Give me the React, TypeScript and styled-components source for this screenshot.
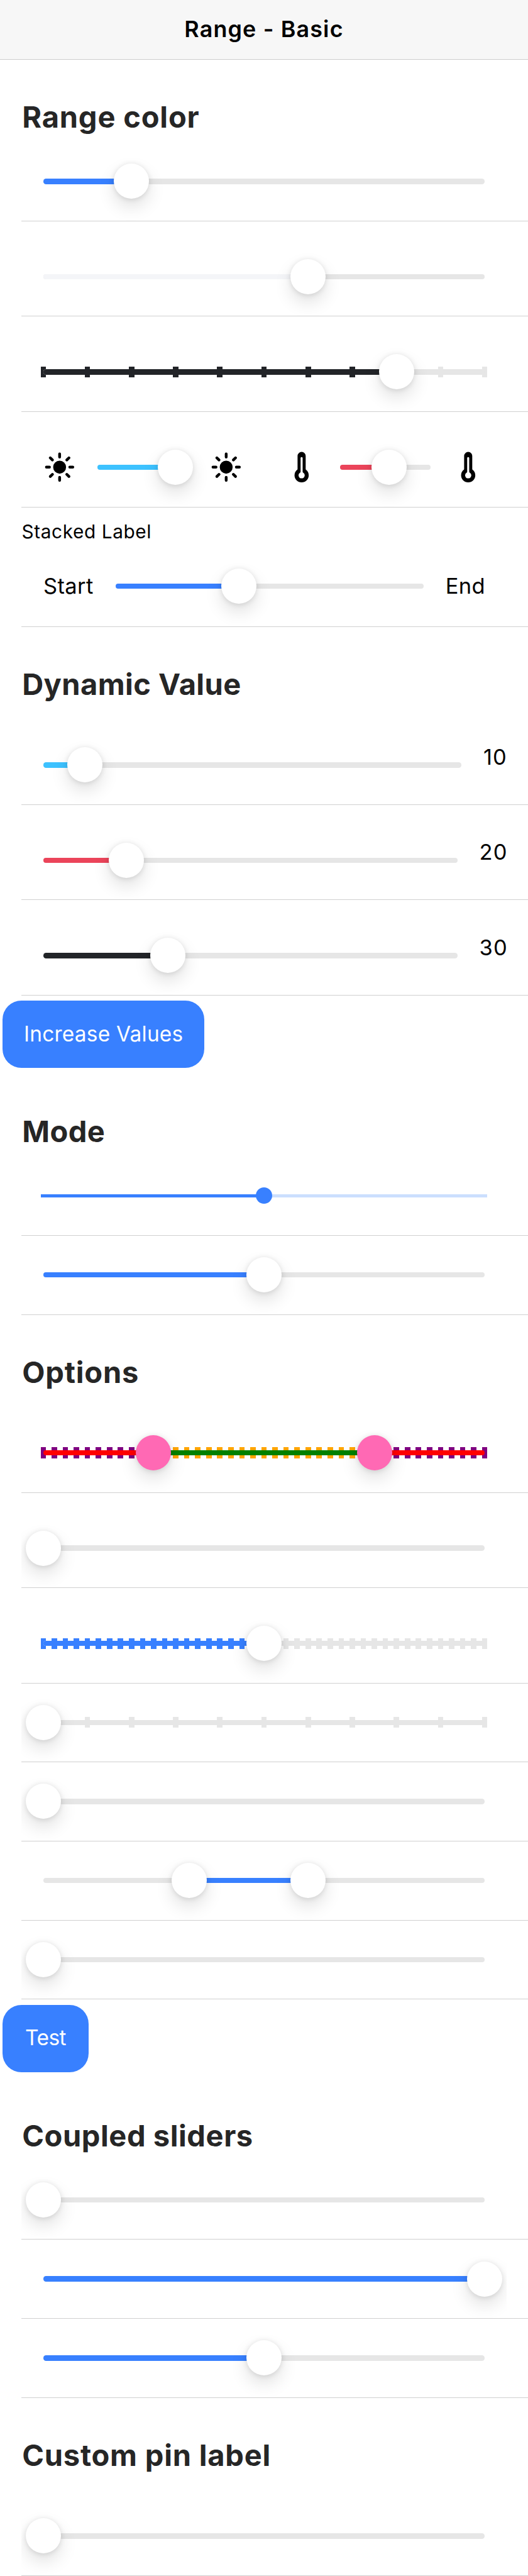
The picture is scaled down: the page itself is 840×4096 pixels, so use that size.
import React from 'react';
import styled, { createGlobalStyle } from 'styled-components';
import { IoSunny, IoThermometer } from 'react-icons/io5';

// Sizes are written on a 1170-unit wide grid and scaled to an 840px page.
const h = (n: number) => `${+((n * 840) / 1170).toFixed(3)}px`;
const v = (n: number) => `${+((n * 4096) / 5703).toFixed(3)}px`;

const colors = {
  primary: '#3880ff',
  tertiary: '#3dc2ff',
  danger: '#eb445a',
  dark: '#222428',
  light: '#f4f5f8',
  track: '#e6e6e6',
};

const GlobalStyle = createGlobalStyle`
  *, *::before, *::after { box-sizing: border-box; }
  body {
    margin: 0;
    background: #fff;
    color: #000;
    font-family: Inter, "Liberation Sans", sans-serif;
  }
`;

const Page = styled.main`
  width: 840px;
  height: 4096px;
  overflow: hidden;
  background: #fff;
`;

const Toolbar = styled.header`
  display: flex;
  align-items: center;
  justify-content: center;
  height: ${v(132)};
  background: #f7f7f7;
  border-bottom: 1px solid #cdcdcd;
`;

const Title = styled.h1`
  margin: 0;
  font-size: ${h(50)};
  font-weight: 600;
  line-height: 1.2;
  letter-spacing: ${h(1.6)};
`;

const ListHeader = styled.h2<{ $spacing: number }>`
  display: flex;
  align-items: center;
  height: ${v(183)};
  margin: 0;
  padding: ${v(70)} 0 0 ${h(49)};
  color: #262626;
  font-size: ${h(65.5)};
  font-weight: 700;
  letter-spacing: ${(p) => h(p.$spacing)};
`;

const Item = styled.div<{ $tall?: boolean }>`
  display: flex;
  align-items: flex-end;
  height: ${(p) => v(p.$tall ? 211 : 175)};
  margin-left: ${h(48)};
  padding-right: ${h(48)};
  border-bottom: 1px solid #d0d0d0;
`;

const StackedItem = styled(Item)`
  flex-direction: column;
  align-items: stretch;
  justify-content: space-between;
  height: ${v(265)};
  padding-top: ${v(28)};
  padding-bottom: ${v(2)};
`;

const StackedLabel = styled.span`
  height: ${v(52)};
  font-size: ${h(41.5)};
  line-height: ${v(52)};
  letter-spacing: ${h(0.85)};
`;

const RangeBox = styled.div`
  display: flex;
  flex: 1 1 auto;
  align-items: center;
  gap: ${h(48)};
  height: ${v(174)};
  padding: 0 ${h(48)};
  overflow: hidden;
`;

const StackedRange = styled(RangeBox)`
  flex: none;
`;

const SplitRange = styled(RangeBox)`
  flex: 1 1 0;
`;

const Track = styled.div<{ $thin?: boolean }>`
  position: relative;
  flex: 1;
  height: ${(p) => h(p.$thin ? 6 : 12)};
  margin: 0 ${(p) => (p.$thin ? h(-6) : 0)};
`;

const Bar = styled.div<{ $color: string; $round?: boolean }>`
  position: absolute;
  top: 0;
  bottom: 0;
  border-radius: ${(p) => (p.$round ? h(6) : 0)};
  background: ${(p) => p.$color};
`;

const Tick = styled.div<{ $color: string }>`
  position: absolute;
  top: ${h(-6)};
  width: ${h(12)};
  height: ${h(24)};
  margin-left: ${h(-6)};
  background: ${(p) => p.$color};
`;

const Knob = styled.div<{ $color: string }>`
  position: absolute;
  top: 50%;
  width: ${h(78)};
  height: ${h(78)};
  margin: ${h(-39)} 0 0 ${h(-39)};
  border-radius: 50%;
  background: ${(p) => p.$color};
  box-shadow: 0 ${h(1.5)} ${h(12)} rgba(0, 0, 0, 0.12), 0 ${h(18)} ${h(39)} rgba(0, 0, 0, 0.12);
`;

const Dot = styled(Knob)`
  width: ${h(36)};
  height: ${h(36)};
  margin: ${h(-18)} 0 0 ${h(-18)};
  box-shadow: none;
`;

const Side = styled.span<{ $width: number; $spacing: number }>`
  flex: none;
  width: ${(p) => h(p.$width)};
  font-size: ${h(48)};
  line-height: 1.2;
  letter-spacing: ${(p) => h(p.$spacing)};
  white-space: nowrap;
`;

const Value = styled(Side)`
  align-self: center;
`;

const IconBox = styled.span`
  display: flex;
  flex: none;
  font-size: ${h(72)};
`;

const ButtonRow = styled.div`
  display: flex;
  height: ${v(174)};
  padding: ${v(12)} ${h(6)} ${v(13)};
`;

const Button = styled.button<{ $width: number; $spacing: number }>`
  display: flex;
  align-items: center;
  justify-content: center;
  width: ${(p) => h(p.$width)};
  padding: 0 0 ${v(4)};
  border: 0;
  border-radius: ${h(42)};
  background: ${colors.primary};
  color: #fff;
  font-family: inherit;
  font-size: ${h(46.6)};
  font-weight: 400;
  letter-spacing: ${(p) => h(p.$spacing)};
  white-space: nowrap;
`;

interface SliderProps {
  from?: number;
  to: number;
  color?: string;
  track?: string;
  steps?: number;
  tickColor?: string;
  activeTickColor?: string;
  knob?: string;
}

function Slider({
  from,
  to,
  color = colors.primary,
  track = colors.track,
  steps = 0,
  tickColor = track,
  activeTickColor = color,
  knob = '#fff',
}: SliderProps) {
  const start = from ?? 0;
  const ticks = steps ? Array.from({ length: steps + 1 }, (_, i) => (i * 100) / steps) : [];
  return (
    <Track>
      {ticks.map((t) => (
        <Tick key={t} $color={t >= start && t <= to ? activeTickColor : tickColor} style={{ left: `${t}%` }} />
      ))}
      <Bar $color={track} $round style={{ left: 0, right: 0 }} />
      <Bar $color={color} $round={from === undefined} style={{ left: `${start}%`, width: `${to - start}%` }} />
      {from !== undefined && <Knob $color={knob} style={{ left: `${from}%` }} />}
      <Knob $color={knob} style={{ left: `${to}%` }} />
    </Track>
  );
}

function RangeItem({ tall, ...slider }: SliderProps & { tall?: boolean }) {
  return (
    <Item $tall={tall}>
      <RangeBox>
        <Slider {...slider} />
      </RangeBox>
    </Item>
  );
}

function ValueItem({ value, color, width }: { value: number; color: string; width: number }) {
  return (
    <Item $tall>
      <RangeBox>
        <Slider to={value} color={color} />
      </RangeBox>
      <Value $width={width} $spacing={1.6}>
        {value}
      </Value>
    </Item>
  );
}

export default function App() {
  return (
    <>
      <GlobalStyle />
      <Page>
        <Toolbar>
          <Title>Range - Basic</Title>
        </Toolbar>

        <ListHeader $spacing={1.15}>Range color</ListHeader>
        <RangeItem to={20} />
        <RangeItem tall to={60} color={colors.light} />
        <RangeItem tall to={80} color={colors.dark} steps={10} />
        <Item $tall>
          <SplitRange>
            <IconBox><IoSunny /></IconBox>
            <Slider to={86} color={colors.tertiary} />
            <IconBox><IoSunny /></IconBox>
          </SplitRange>
          <SplitRange>
            <IconBox><IoThermometer /></IconBox>
            <Slider to={54} color={colors.danger} />
            <IconBox><IoThermometer /></IconBox>
          </SplitRange>
        </Item>
        <StackedItem>
          <StackedLabel>Stacked Label</StackedLabel>
          <StackedRange>
            <Side $width={112} $spacing={0.55}>Start</Side>
            <Slider to={40} />
            <Side $width={87} $spacing={0.6}>End</Side>
          </StackedRange>
        </StackedItem>

        <ListHeader $spacing={0.6}>Dynamic Value</ListHeader>
        <ValueItem value={10} color={colors.tertiary} width={51} />
        <ValueItem value={20} color={colors.danger} width={60} />
        <ValueItem value={30} color={colors.dark} width={60} />
        <ButtonRow>
          <Button $width={447} $spacing={0.3}>Increase Values</Button>
        </ButtonRow>

        <ListHeader $spacing={0.6}>Mode</ListHeader>
        <Item>
          <RangeBox>
            <Track $thin>
              <Bar $color="#cbdffe" style={{ left: 0, right: 0 }} />
              <Bar $color={colors.primary} style={{ left: 0, width: '50%' }} />
              <Dot $color={colors.primary} style={{ left: '50%' }} />
            </Track>
          </RangeBox>
        </Item>
        <RangeItem to={50} />

        <ListHeader $spacing={1.15}>Options</ListHeader>
        <RangeItem
          tall
          from={25}
          to={75}
          color="green"
          track="red"
          steps={40}
          tickColor="purple"
          activeTickColor="orange"
          knob="hotpink"
        />
        <RangeItem tall to={0} />
        <RangeItem tall to={50} steps={40} />
        <RangeItem to={0} steps={10} />
        <RangeItem to={0} />
        <RangeItem from={33} to={60} />
        <RangeItem to={0} />
        <ButtonRow>
          <Button $width={190} $spacing={-0.8}>Test</Button>
        </ButtonRow>

        <ListHeader $spacing={0.8}>Coupled sliders</ListHeader>
        <RangeItem to={0} />
        <RangeItem to={100} />
        <RangeItem to={50} />

        <ListHeader $spacing={1.1}>Custom pin label</ListHeader>
        <RangeItem tall to={0} />
      </Page>
    </>
  );
}
